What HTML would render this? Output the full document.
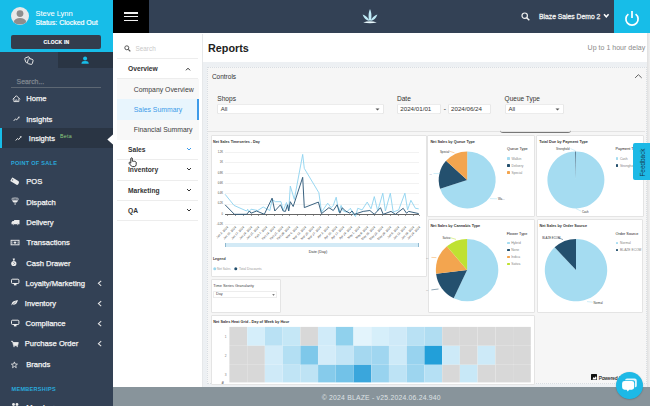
<!DOCTYPE html>
<html><head><meta charset="utf-8"><style>
html,body{margin:0;padding:0;width:650px;height:406px;overflow:hidden;background:#fff;}
body{position:relative;font-family:"Liberation Sans", sans-serif;}
.t{position:absolute;white-space:nowrap;}
.r{position:absolute;box-sizing:content-box;}
svg.r{overflow:visible;}
</style></head><body>
<div class="r" style="left:0px;top:0px;width:113px;height:406px;background:#334155;"></div>
<div class="r" style="left:0px;top:0px;width:113px;height:52px;background:#17bde8;"></div>
<svg class="r" style="left:11px;top:7px;" width="18" height="18" viewBox="0 0 18 18"><circle cx="9" cy="9" r="9" fill="#e9e9e9"/><circle cx="9" cy="6.6" r="3.4" fill="#8e8e8e"/><path d="M2.6 15.2 Q4 11 9 11 Q14 11 15.4 15.2 Q12.8 17.6 9 17.6 Q5.2 17.6 2.6 15.2Z" fill="#8e8e8e"/></svg>
<div class="t" style="left:35.40px;top:10.35px;font-size:7.5px;line-height:7.5px;color:#fff;font-weight:normal;-webkit-text-stroke:0.05px #fff;">Steve Lynn</div>
<div class="t" style="left:35.40px;top:18.97px;font-size:7.0px;line-height:7.0px;color:#fff;font-weight:normal;-webkit-text-stroke:0.2px #fff;">Status: Clocked Out</div>
<div class="r" style="left:11.1px;top:34.8px;width:89.8px;height:13.8px;background:#333d4d;border-radius:2px;"></div>
<div class="t" style="left:43.60px;top:40.17px;font-size:5.0px;line-height:5.0px;color:#fff;font-weight:bold;letter-spacing:0.2px;-webkit-text-stroke:0.15px #fff;">CLOCK IN</div>
<div class="r" style="left:58px;top:52px;width:55px;height:16px;background:#2a3544;"></div>
<svg class="r" style="left:20px;top:52px;" width="20" height="16" viewBox="0 0 20 16"><rect x="5.2" y="5.2" width="5" height="5.2" rx="1.2" transform="rotate(-20 7.7 7.8)" fill="none" stroke="#e8e8e8" stroke-width="0.9"/><rect x="7.8" y="6.9" width="5" height="5.2" rx="1.2" transform="rotate(15 10.3 9.5)" fill="#334155" stroke="#e8e8e8" stroke-width="0.9"/></svg>
<svg class="r" style="left:78px;top:52px;" width="14" height="16" viewBox="0 0 14 16"><circle cx="7.1" cy="6.5" r="2" fill="#17bde8"/><path d="M3.4 11.7 L3.9 9.9 Q4.4 8.9 7.1 8.9 Q9.8 8.9 10.3 9.9 L10.8 11.7Z" fill="#17bde8"/></svg>
<div class="t" style="left:16.60px;top:78.76px;font-size:6.9px;line-height:6.9px;color:#7e858e;font-weight:normal;-webkit-text-stroke:0.25px #7e858e;">Search...</div>
<div class="r" style="left:11px;top:87px;width:90px;height:1px;background:#5d6773;"></div>
<div class="t" style="left:26.20px;top:95.47px;font-size:7.6px;line-height:7.6px;color:#f4f4f4;font-weight:normal;-webkit-text-stroke:0.25px #f4f4f4;">Home</div>
<div class="t" style="left:26.20px;top:115.87px;font-size:7.6px;line-height:7.6px;color:#f4f4f4;font-weight:normal;-webkit-text-stroke:0.25px #f4f4f4;">Insights</div>
<div class="r" style="left:0px;top:128.3px;width:113px;height:20.19999999999999px;background:#2a3544;"></div>
<div class="r" style="left:0px;top:128.3px;width:2px;height:20.19999999999999px;background:#17bde8;"></div>
<div class="t" style="left:28.80px;top:135.37px;font-size:7.6px;line-height:7.6px;color:#f4f4f4;font-weight:normal;-webkit-text-stroke:0.25px #f4f4f4;">Insights</div>
<div class="t" style="left:60.00px;top:134.11px;font-size:5.3px;line-height:5.3px;color:#8dcb7f;font-weight:normal;letter-spacing:0.3px;">Beta</div>
<svg class="r" style="left:106.5px;top:133.5px;" width="7" height="11" viewBox="0 0 7 11"><path d="M6.5 0 L0.3 5.5 L6.5 11Z" fill="#fff"/></svg>
<div class="t" style="left:11.00px;top:161.26px;font-size:5.6px;line-height:5.6px;color:#2aa9dc;font-weight:bold;letter-spacing:0.25px;">POINT OF SALE</div>
<div class="t" style="left:26.20px;top:178.17px;font-size:7.6px;line-height:7.6px;color:#f4f4f4;font-weight:normal;-webkit-text-stroke:0.25px #f4f4f4;">POS</div>
<div class="t" style="left:26.20px;top:198.57px;font-size:7.6px;line-height:7.6px;color:#f4f4f4;font-weight:normal;-webkit-text-stroke:0.25px #f4f4f4;">Dispatch</div>
<div class="t" style="left:26.20px;top:219.07px;font-size:7.6px;line-height:7.6px;color:#f4f4f4;font-weight:normal;-webkit-text-stroke:0.25px #f4f4f4;">Delivery</div>
<div class="t" style="left:26.60px;top:239.47px;font-size:7.6px;line-height:7.6px;color:#f4f4f4;font-weight:normal;-webkit-text-stroke:0.25px #f4f4f4;">Transactions</div>
<div class="t" style="left:26.20px;top:259.57px;font-size:7.6px;line-height:7.6px;color:#f4f4f4;font-weight:normal;-webkit-text-stroke:0.25px #f4f4f4;">Cash Drawer</div>
<div class="t" style="left:25.50px;top:279.77px;font-size:7.6px;line-height:7.6px;color:#f4f4f4;font-weight:normal;-webkit-text-stroke:0.25px #f4f4f4;">Loyalty/Marketing</div>
<div class="t" style="left:24.80px;top:300.07px;font-size:7.6px;line-height:7.6px;color:#f4f4f4;font-weight:normal;-webkit-text-stroke:0.25px #f4f4f4;">Inventory</div>
<div class="t" style="left:25.50px;top:320.17px;font-size:7.6px;line-height:7.6px;color:#f4f4f4;font-weight:normal;-webkit-text-stroke:0.25px #f4f4f4;">Compliance</div>
<div class="t" style="left:24.70px;top:340.17px;font-size:7.6px;line-height:7.6px;color:#f4f4f4;font-weight:normal;-webkit-text-stroke:0.25px #f4f4f4;">Purchase Order</div>
<div class="t" style="left:26.20px;top:360.77px;font-size:7.6px;line-height:7.6px;color:#f4f4f4;font-weight:normal;-webkit-text-stroke:0.25px #f4f4f4;">Brands</div>
<div class="t" style="left:11.50px;top:386.76px;font-size:5.6px;line-height:5.6px;color:#2aa9dc;font-weight:bold;letter-spacing:0.25px;">MEMBERSHIPS</div>
<div class="t" style="left:26.20px;top:403.57px;font-size:7.6px;line-height:7.6px;color:#f4f4f4;font-weight:normal;-webkit-text-stroke:0.25px #f4f4f4;">Members</div>
<svg class="r" style="left:0;top:0" width="113" height="406" viewBox="0 0 113 406"><path d="M12.8 99.3 L16.4 95.7 L20 99.3" fill="none" stroke="#ececec" stroke-width="0.95"/><path d="M13.9 98.5 V101.6 H18.9 V98.5" fill="none" stroke="#ececec" stroke-width="0.9"/><path d="M15.7 101.6 V99.9 H17.1 V101.6" fill="none" stroke="#ececec" stroke-width="0.7"/><g transform="translate(0,0)"><path d="M13.7 120.9 L15.5 118.9 L16.7 119.9 L18.6 117.6" fill="none" stroke="#ececec" stroke-width="0.95"/><path d="M17.6 117 L19.6 116.5 L19.1 118.5Z" fill="#ececec"/></g><g transform="translate(2,19.6)"><path d="M13.7 120.9 L15.5 118.9 L16.7 119.9 L18.6 117.6" fill="none" stroke="#ececec" stroke-width="0.95"/><path d="M17.6 117 L19.6 116.5 L19.1 118.5Z" fill="#ececec"/></g><g transform="rotate(32 15.1 181.5)"><path d="M11.2 179.4 H17.6 Q19.2 179.4 19.2 181.5 Q19.2 183.6 17.6 183.6 H11.2 Q10.6 183.6 10.6 183 V180 Q10.6 179.4 11.2 179.4Z" fill="#ececec"/><circle cx="12.2" cy="181.5" r="0.6" fill="#334155"/></g><ellipse cx="15.1" cy="199.1" rx="3.4" ry="1.1" fill="none" stroke="#ececec" stroke-width="0.8"/><path d="M11.8 200.4 H18.4 L16.6 202.6 H13.6Z" fill="#ececec"/><path d="M15.1 202.6 V205" stroke="#ececec" stroke-width="0.8"/><path d="M14.1 220 H19.5 V224.3 H11.5 V222.2 L12.6 220.9 H14.1Z" fill="#ececec"/><circle cx="13.2" cy="224.6" r="0.95" fill="#334155"/><circle cx="13.2" cy="224.6" r="0.6" fill="#ececec"/><circle cx="17.8" cy="224.6" r="0.95" fill="#334155"/><circle cx="17.8" cy="224.6" r="0.6" fill="#ececec"/><rect x="11.1" y="240.3" width="7.9" height="4.5" fill="none" stroke="#ececec" stroke-width="0.95"/><path d="M15 241.2 L16.6 242.55 L15 243.9 L13.4 242.55Z" fill="#ececec"/><path d="M12.6 241.6 L12 242.55 L12.6 243.5 M17.4 241.6 L18 242.55 L17.4 243.5" fill="none" stroke="#ececec" stroke-width="0.6"/><circle cx="13.8" cy="263.5" r="2.6" fill="#ececec"/><path d="M12.7 258.6 H14.9 L14.4 260.7 H13.2Z" fill="#ececec"/><path d="M13.5 262.2 L14.6 263.4 L13.5 264.6" fill="none" stroke="#334155" stroke-width="0.6"/><rect x="11.5" y="279.2" width="7.4" height="4.3" rx="1" fill="none" stroke="#ececec" stroke-width="1"/><path d="M13.9 283.5 H16.5 V285.4 H13.9Z" fill="#ececec"/><rect x="11.5" y="320.2" width="7.4" height="4.3" rx="1" fill="none" stroke="#ececec" stroke-width="1"/><path d="M13.9 324.5 H16.5 V326.4 H13.9Z" fill="#ececec"/><path d="M11.3 305.8 Q11.6 301.8 14.4 301 Q16.2 300.5 17.9 300 Q17.4 302.2 16.4 303.4 Q14.6 305.2 12.2 304.6 Z" fill="#ececec"/><path d="M11.3 305.8 L15.8 301.8" stroke="#334155" stroke-width="0.5"/><path d="M11.1 341.3 H12.6 L13.6 345.6 H17.6 L18.3 342.5 H12.9" fill="#ececec" stroke="#ececec" stroke-width="0.8" stroke-linejoin="round"/><circle cx="14" cy="346.6" r="0.7" fill="#ececec"/><circle cx="17.2" cy="346.6" r="0.7" fill="#ececec"/><polygon points="14.40,361.90 15.19,364.01 17.44,364.11 15.68,365.52 16.28,367.69 14.40,366.45 12.52,367.69 13.12,365.52 11.36,364.11 13.61,364.01" fill="none" stroke="#ececec" stroke-width="0.8"/><circle cx="13.5" cy="404.5" r="1.4" fill="#ececec"/><circle cx="17" cy="404.5" r="1.4" fill="#ececec"/><path d="M101.2 280.8 L98.4 283.3 L101.2 285.8" fill="none" stroke="#e6e6e6" stroke-width="1.05"/><path d="M101.2 301.1 L98.4 303.6 L101.2 306.1" fill="none" stroke="#e6e6e6" stroke-width="1.05"/><path d="M101.2 321.20000000000005 L98.4 323.70000000000005 L101.2 326.20000000000005" fill="none" stroke="#e6e6e6" stroke-width="1.05"/><path d="M101.2 341.20000000000005 L98.4 343.70000000000005 L101.2 346.20000000000005" fill="none" stroke="#e6e6e6" stroke-width="1.05"/></svg>
<div class="r" style="left:113px;top:0px;width:537px;height:33.4px;background:#334155;"></div>
<div class="r" style="left:113px;top:0px;width:36px;height:33.4px;background:#000;"></div>
<div class="r" style="left:124px;top:12.3px;width:14px;height:1.3000000000000007px;background:#f2f2f2;"></div>
<div class="r" style="left:124px;top:16.0px;width:14px;height:1.3000000000000007px;background:#f2f2f2;"></div>
<div class="r" style="left:124px;top:19.7px;width:14px;height:1.3000000000000007px;background:#f2f2f2;"></div>
<svg class="r" style="left:360px;top:8px;" width="20" height="17" viewBox="0 0 20 17"><path d="M10 1 Q12 5 11.2 11.5 L10 13 L8.8 11.5 Q8 5 10 1Z" fill="#bfeaf6"/><path d="M2.6 6.5 Q7.5 8 9.6 13 Q4.5 12.2 2.6 6.5Z" fill="#bfeaf6"/><path d="M17.4 6.5 Q12.5 8 10.4 13 Q15.5 12.2 17.4 6.5Z" fill="#bfeaf6"/><path d="M3.2 14.6 Q10 12 16.8 14.6 Q10 16 3.2 14.6Z" fill="#e8f8fc"/></svg>
<svg class="r" style="left:521px;top:12px;" width="9" height="9" viewBox="0 0 9 9"><circle cx="3.7" cy="3.7" r="2.7" fill="none" stroke="#f0f0f0" stroke-width="1.2"/><path d="M5.7 5.7 L8.3 8.3" stroke="#f0f0f0" stroke-width="1.4"/></svg>
<div class="t" style="left:539.00px;top:13.66px;font-size:6.78px;line-height:6.78px;color:#eeeeee;font-weight:normal;-webkit-text-stroke:0.3px #eee;">Blaze Sales Demo 2</div>
<svg class="r" style="left:602.6px;top:13.2px;" width="7" height="6" viewBox="0 0 7 6"><path d="M1 1.3 L3.3 3.8 L5.6 1.3" fill="none" stroke="#fff" stroke-width="1.5"/></svg>
<div class="r" style="left:614px;top:0px;width:36px;height:33.4px;background:#17bde8;"></div>
<svg class="r" style="left:624px;top:9.3px;" width="16" height="16" viewBox="0 0 16 16"><path d="M4.4 5.1 A6.1 6.1 0 1 0 11.6 5.1" fill="none" stroke="#fff" stroke-width="1.7"/><path d="M8 1.9 V8.9" stroke="#fff" stroke-width="1.7"/></svg>
<div class="r" style="left:113px;top:33.4px;width:89px;height:353.6px;background:#fff;"></div>
<div class="r" style="left:202px;top:34px;width:1px;height:353px;background:#e6e8ea;"></div>
<svg class="r" style="left:123.5px;top:45px;" width="7" height="7" viewBox="0 0 7 7"><circle cx="2.8" cy="2.8" r="2" fill="none" stroke="#555" stroke-width="1"/><path d="M4.3 4.3 L6.3 6.3" stroke="#555" stroke-width="1.2"/></svg>
<div class="t" style="left:135.50px;top:46.18px;font-size:6.4px;line-height:6.4px;color:#c9c9c9;font-weight:normal;">Search</div>
<div class="r" style="left:117px;top:58px;width:81px;height:1px;background:#ededed;"></div>
<div class="t" style="left:128.00px;top:65.93px;font-size:6.7px;line-height:6.7px;color:#333;font-weight:bold;">Overview</div>
<svg class="r" style="left:185px;top:67px;" width="6" height="4" viewBox="0 0 6 4"><path d="M1 3.3 L3 1.2 L5 3.3" fill="none" stroke="#333" stroke-width="1"/></svg>
<div class="r" style="left:117px;top:78px;width:81px;height:1px;background:#ededed;"></div>
<div class="r" style="left:117px;top:79px;width:82px;height:61px;background:#f8f8f8;"></div>
<div class="t" style="left:133.80px;top:86.89px;font-size:6.86px;line-height:6.86px;color:#3d3d3d;font-weight:normal;">Company Overview</div>
<div class="r" style="left:117px;top:99px;width:82px;height:21px;background:#e8f5fd;"></div>
<div class="r" style="left:197px;top:99px;width:2px;height:21px;background:#3d9be9;"></div>
<div class="t" style="left:133.80px;top:106.69px;font-size:6.86px;line-height:6.86px;color:#3d9be9;font-weight:normal;">Sales Summary</div>
<div class="t" style="left:133.80px;top:127.09px;font-size:6.86px;line-height:6.86px;color:#3d3d3d;font-weight:normal;">Financial Summary</div>
<div class="t" style="left:128.00px;top:147.33px;font-size:6.7px;line-height:6.7px;color:#333;font-weight:bold;">Sales</div>
<svg class="r" style="left:185.5px;top:147.4px;" width="6" height="4" viewBox="0 0 6 4"><path d="M1 1 L3 3 L5 1" fill="none" stroke="#3d9be9" stroke-width="1"/></svg>
<div class="t" style="left:128.00px;top:167.33px;font-size:6.7px;line-height:6.7px;color:#333;font-weight:bold;">Inventory</div>
<svg class="r" style="left:185.5px;top:167.4px;" width="6" height="4" viewBox="0 0 6 4"><path d="M1 1 L3 3 L5 1" fill="none" stroke="#333" stroke-width="1"/></svg>
<div class="t" style="left:128.00px;top:187.73px;font-size:6.7px;line-height:6.7px;color:#333;font-weight:bold;">Marketing</div>
<svg class="r" style="left:185.5px;top:187.8px;" width="6" height="4" viewBox="0 0 6 4"><path d="M1 1 L3 3 L5 1" fill="none" stroke="#333" stroke-width="1"/></svg>
<div class="t" style="left:128.00px;top:208.03px;font-size:6.7px;line-height:6.7px;color:#333;font-weight:bold;">QA</div>
<svg class="r" style="left:185.5px;top:208.1px;" width="6" height="4" viewBox="0 0 6 4"><path d="M1 1 L3 3 L5 1" fill="none" stroke="#333" stroke-width="1"/></svg>
<div class="r" style="left:117px;top:159px;width:81px;height:1px;background:#ededed;"></div>
<div class="r" style="left:117px;top:180px;width:81px;height:1px;background:#ededed;"></div>
<div class="r" style="left:117px;top:200px;width:81px;height:1px;background:#ededed;"></div>
<div class="r" style="left:117px;top:220px;width:81px;height:1px;background:#ededed;"></div>
<svg class="r" style="left:127.6px;top:157.2px;" width="9" height="10" viewBox="0 0 9 10"><path d="M3 1 Q3.8 0.6 4.3 1.2 V4.2 Q5 3.8 5.6 4.3 Q6.4 4 7 4.6 Q7.8 4.5 8.2 5.2 V7.6 Q8 9.4 6.4 9.6 H4.4 Q3.4 9.4 2.6 8.2 L1 6.2 Q0.8 5.4 1.6 5.3 L2.8 6.2 V1.6Z" fill="#fff" stroke="#111" stroke-width="0.85"/></svg>
<div class="r" style="left:203px;top:33.4px;width:447px;height:28.6px;background:#fff;"></div>
<div class="t" style="left:208.00px;top:43.26px;font-size:10.8px;line-height:10.8px;color:#222;font-weight:bold;">Reports</div>
<div class="t" style="left:587.60px;top:44.33px;font-size:7.05px;line-height:7.05px;color:#8a8a8a;font-weight:normal;">Up to 1 hour delay</div>
<div class="r" style="left:203px;top:62px;width:447px;height:325px;background:#edf0f3;"></div>
<div class="r" style="left:646.5px;top:33px;width:3.5px;height:354px;background:linear-gradient(to right,#e0e0e0,#f0f0f0);"></div>
<div class="r" style="left:207px;top:67px;width:438px;height:315px;background:#f6f6f6;border:1px dotted #d9dee3;"></div>
<div class="t" style="left:211.90px;top:73.80px;font-size:6.5px;line-height:6.5px;color:#333;font-weight:normal;">Controls</div>
<svg class="r" style="left:633.5px;top:72.5px;" width="9" height="6" viewBox="0 0 9 6"><path d="M1.1 4.9 L4.4 1.7 L7.7 4.9" fill="none" stroke="#5a5a5a" stroke-width="0.95"/></svg>
<div class="t" style="left:217.30px;top:96.21px;font-size:6.6px;line-height:6.6px;color:#333;font-weight:normal;">Shops</div>
<div class="t" style="left:396.90px;top:96.21px;font-size:6.6px;line-height:6.6px;color:#333;font-weight:normal;">Date</div>
<div class="t" style="left:504.60px;top:96.30px;font-size:6.5px;line-height:6.5px;color:#333;font-weight:normal;">Queue Type</div>
<div class="r" style="left:217.3px;top:103.5px;width:166.50px;height:10.20px;background:#fff;box-shadow:inset 0 0 0 0.6px #d9d9d9;border-radius:2px;"></div>
<div class="t" style="left:220.70px;top:106.32px;font-size:6.0px;line-height:6.0px;color:#333;font-weight:normal;">All</div>
<svg class="r" style="left:374.5px;top:107.5px;" width="5" height="3" viewBox="0 0 5 3"><path d="M0.5 0.5 H4.5 L2.5 2.5Z" fill="#555"/></svg>
<div class="r" style="left:396.6px;top:103.5px;width:44.60px;height:10.20px;background:#fff;box-shadow:inset 0 0 0 0.6px #d9d9d9;border-radius:2px;"></div>
<div class="t" style="left:400.30px;top:106.15px;font-size:6.2px;line-height:6.2px;color:#333;font-weight:normal;">2024/01/01</div>
<div class="t" style="left:443.80px;top:105.81px;font-size:6.6px;line-height:6.6px;color:#222;font-weight:normal;">-</div>
<div class="r" style="left:447.6px;top:103.5px;width:43.90px;height:10.20px;background:#fff;box-shadow:inset 0 0 0 0.6px #d9d9d9;border-radius:2px;"></div>
<div class="t" style="left:451.00px;top:106.15px;font-size:6.2px;line-height:6.2px;color:#333;font-weight:normal;">2024/06/24</div>
<div class="r" style="left:504.6px;top:103.5px;width:59.70px;height:10.20px;background:#fff;box-shadow:inset 0 0 0 0.6px #d9d9d9;border-radius:2px;"></div>
<div class="t" style="left:508.50px;top:106.32px;font-size:6.0px;line-height:6.0px;color:#333;font-weight:normal;">All</div>
<svg class="r" style="left:555px;top:107.5px;" width="5" height="3" viewBox="0 0 5 3"><path d="M0.5 0.5 H4.5 L2.5 2.5Z" fill="#555"/></svg>
<div class="r" style="left:208px;top:130.8px;width:437px;height:0.799999999999983px;background:#e3e3e3;"></div>
<div class="r" style="left:500px;top:129.5px;width:71px;height:2px;border-bottom:1.2px solid #777;border-radius:0 0 3px 3px;"></div>
<div class="r" style="left:210.5px;top:134.6px;width:214.0px;height:140.4px;background:#fff;border:0.6px solid #e4e4e4;border-radius:1px;"></div>
<div class="t" style="left:213.00px;top:140.87px;font-size:3.7px;line-height:3.7px;color:#333;font-weight:bold;">Net Sales Timeseries - Day</div>
<div class="t" style="left:196px;width:27px;text-align:right;top:150.60px;font-size:2.6px;line-height:3px;color:#444;">1.2K</div>
<div class="r" style="left:224.7px;top:151.79999999999998px;width:194.0px;height:0.700000000000017px;background:#f2f2f2;"></div>
<div class="t" style="left:196px;width:27px;text-align:right;top:161.00px;font-size:2.6px;line-height:3px;color:#444;">1K</div>
<div class="r" style="left:224.7px;top:162.2px;width:194.0px;height:0.700000000000017px;background:#f2f2f2;"></div>
<div class="t" style="left:196px;width:27px;text-align:right;top:171.50px;font-size:2.6px;line-height:3px;color:#444;">0.8K</div>
<div class="r" style="left:224.7px;top:172.7px;width:194.0px;height:0.700000000000017px;background:#f2f2f2;"></div>
<div class="t" style="left:196px;width:27px;text-align:right;top:181.70px;font-size:2.6px;line-height:3px;color:#444;">0.6K</div>
<div class="r" style="left:224.7px;top:182.89999999999998px;width:194.0px;height:0.700000000000017px;background:#f2f2f2;"></div>
<div class="t" style="left:196px;width:27px;text-align:right;top:191.90px;font-size:2.6px;line-height:3px;color:#444;">0.4K</div>
<div class="r" style="left:224.7px;top:193.1px;width:194.0px;height:0.700000000000017px;background:#f2f2f2;"></div>
<div class="t" style="left:196px;width:27px;text-align:right;top:202.40px;font-size:2.6px;line-height:3px;color:#444;">0.2K</div>
<div class="r" style="left:224.7px;top:203.6px;width:194.0px;height:0.700000000000017px;background:#f2f2f2;"></div>
<div class="t" style="left:196px;width:27px;text-align:right;top:212.70px;font-size:2.6px;line-height:3px;color:#444;">0</div>
<div class="r" style="left:224.7px;top:213.79999999999998px;width:194.0px;height:0.9000000000000057px;background:#666;"></div>
<div class="t" style="left:196px;width:27px;text-align:right;top:223.00px;font-size:2.6px;line-height:3px;color:#444;">-0.2K</div>
<div class="r" style="left:224.7px;top:224.2px;width:194.0px;height:0.700000000000017px;background:#f2f2f2;"></div>
<svg class="r" style="left:200px;top:140px" width="230" height="90" viewBox="0 0 230 90"><polyline points="25.1,54.3 34.0,65.4 46.6,71.0 47.7,69.2 48.8,72.1 51.0,69.2 57.7,70.5 63.2,67.0 69.9,70.5 72.1,59.4 75.4,61.7 81.0,61.7 83.2,70.5 86.5,62.5 88.7,70.5 90.3,46.1 94.3,59.4 102.7,14.4 104.3,28.4 118.9,52.8 121.5,72.1 127.7,63.2 131.1,67.7 133.3,65.4 136.2,57.2 138.8,72.1 141.1,65.4 143.3,71.0 146.6,72.1 150.4,68.3 153.3,74.3 155.5,76.5 157.7,68.3 162.1,69.9 167.2,62.1 171.0,68.8 174.3,56.6 177.7,71.0 182.8,53.2 185.4,71.0 190.3,53.2 193.2,72.1 198.7,69.9 204.9,53.2 207.6,69.9 210.9,60.3 215.4,68.3 218.7,68.8" fill="none" stroke="#8dd2ef" stroke-width="0.9" stroke-linejoin="round"/><polyline points="25.1,64.8 34.4,74.3 46.6,74.3 49.5,71.0 51.0,73.2 56.6,71.0 64.3,74.3 72.1,58.1 74.8,71.0 80.5,64.8 83.2,71.0 85.4,71.4 87.6,64.8 88.7,71.0 90.3,61.7 93.2,66.5 102.7,37.3 104.3,67.6 118.4,62.1 121.5,73.6 128.9,67.7 133.3,70.5 137.1,64.8 139.9,73.2 142.2,67.7 145.5,71.0 149.9,73.2 152.1,71.0 154.4,74.3 163.2,71.4 169.9,70.5 174.3,74.3 180.5,67.7 183.2,74.3 191.0,71.4 195.4,74.3 203.2,68.3 206.5,73.2 208.7,71.4 218.7,73.6" fill="none" stroke="#2f5a79" stroke-width="0.95" stroke-linejoin="round"/></svg>
<div class="t" style="left:187.31px;top:226.40px;width:40px;text-align:right;font-size:3.0px;line-height:3px;color:#333;transform-origin:100% 0;transform:rotate(-45deg);">Jan 3, 2024</div>
<div class="r" style="left:227.3px;top:214.6px;width:0.5px;height:1.4000000000000057px;background:#999;"></div>
<div class="t" style="left:195.06px;top:226.40px;width:40px;text-align:right;font-size:3.0px;line-height:3px;color:#333;transform-origin:100% 0;transform:rotate(-45deg);">Jan 10, 2024</div>
<div class="r" style="left:235.1px;top:214.6px;width:0.5px;height:1.4000000000000057px;background:#999;"></div>
<div class="t" style="left:202.80px;top:226.40px;width:40px;text-align:right;font-size:3.0px;line-height:3px;color:#333;transform-origin:100% 0;transform:rotate(-45deg);">Jan 17, 2024</div>
<div class="r" style="left:242.8px;top:214.6px;width:0.5px;height:1.4000000000000057px;background:#999;"></div>
<div class="t" style="left:210.54px;top:226.40px;width:40px;text-align:right;font-size:3.0px;line-height:3px;color:#333;transform-origin:100% 0;transform:rotate(-45deg);">Jan 24, 2024</div>
<div class="r" style="left:250.5px;top:214.6px;width:0.5px;height:1.4000000000000057px;background:#999;"></div>
<div class="t" style="left:218.29px;top:226.40px;width:40px;text-align:right;font-size:3.0px;line-height:3px;color:#333;transform-origin:100% 0;transform:rotate(-45deg);">Jan 31, 2024</div>
<div class="r" style="left:258.3px;top:214.6px;width:0.5px;height:1.4000000000000057px;background:#999;"></div>
<div class="t" style="left:226.03px;top:226.40px;width:40px;text-align:right;font-size:3.0px;line-height:3px;color:#333;transform-origin:100% 0;transform:rotate(-45deg);">Feb 7, 2024</div>
<div class="r" style="left:266.0px;top:214.6px;width:0.5px;height:1.4000000000000057px;background:#999;"></div>
<div class="t" style="left:233.78px;top:226.40px;width:40px;text-align:right;font-size:3.0px;line-height:3px;color:#333;transform-origin:100% 0;transform:rotate(-45deg);">Feb 14, 2024</div>
<div class="r" style="left:273.8px;top:214.6px;width:0.5px;height:1.4000000000000057px;background:#999;"></div>
<div class="t" style="left:241.52px;top:226.40px;width:40px;text-align:right;font-size:3.0px;line-height:3px;color:#333;transform-origin:100% 0;transform:rotate(-45deg);">Feb 21, 2024</div>
<div class="r" style="left:281.5px;top:214.6px;width:0.5px;height:1.4000000000000057px;background:#999;"></div>
<div class="t" style="left:249.26px;top:226.40px;width:40px;text-align:right;font-size:3.0px;line-height:3px;color:#333;transform-origin:100% 0;transform:rotate(-45deg);">Feb 28, 2024</div>
<div class="r" style="left:289.3px;top:214.6px;width:0.5px;height:1.4000000000000057px;background:#999;"></div>
<div class="t" style="left:257.01px;top:226.40px;width:40px;text-align:right;font-size:3.0px;line-height:3px;color:#333;transform-origin:100% 0;transform:rotate(-45deg);">Mar 6, 2024</div>
<div class="r" style="left:297.0px;top:214.6px;width:0.5px;height:1.4000000000000057px;background:#999;"></div>
<div class="t" style="left:264.75px;top:226.40px;width:40px;text-align:right;font-size:3.0px;line-height:3px;color:#333;transform-origin:100% 0;transform:rotate(-45deg);">Mar 13, 2024</div>
<div class="r" style="left:304.8px;top:214.6px;width:0.5px;height:1.4000000000000057px;background:#999;"></div>
<div class="t" style="left:272.50px;top:226.40px;width:40px;text-align:right;font-size:3.0px;line-height:3px;color:#333;transform-origin:100% 0;transform:rotate(-45deg);">Mar 20, 2024</div>
<div class="r" style="left:312.5px;top:214.6px;width:0.5px;height:1.4000000000000057px;background:#999;"></div>
<div class="t" style="left:280.24px;top:226.40px;width:40px;text-align:right;font-size:3.0px;line-height:3px;color:#333;transform-origin:100% 0;transform:rotate(-45deg);">Mar 27, 2024</div>
<div class="r" style="left:320.2px;top:214.6px;width:0.5px;height:1.4000000000000057px;background:#999;"></div>
<div class="t" style="left:287.98px;top:226.40px;width:40px;text-align:right;font-size:3.0px;line-height:3px;color:#333;transform-origin:100% 0;transform:rotate(-45deg);">Apr 3, 2024</div>
<div class="r" style="left:328.0px;top:214.6px;width:0.5px;height:1.4000000000000057px;background:#999;"></div>
<div class="t" style="left:295.73px;top:226.40px;width:40px;text-align:right;font-size:3.0px;line-height:3px;color:#333;transform-origin:100% 0;transform:rotate(-45deg);">Apr 10, 2024</div>
<div class="r" style="left:335.7px;top:214.6px;width:0.5px;height:1.4000000000000057px;background:#999;"></div>
<div class="t" style="left:303.47px;top:226.40px;width:40px;text-align:right;font-size:3.0px;line-height:3px;color:#333;transform-origin:100% 0;transform:rotate(-45deg);">Apr 17, 2024</div>
<div class="r" style="left:343.5px;top:214.6px;width:0.5px;height:1.4000000000000057px;background:#999;"></div>
<div class="t" style="left:311.22px;top:226.40px;width:40px;text-align:right;font-size:3.0px;line-height:3px;color:#333;transform-origin:100% 0;transform:rotate(-45deg);">Apr 24, 2024</div>
<div class="r" style="left:351.2px;top:214.6px;width:0.5px;height:1.4000000000000057px;background:#999;"></div>
<div class="t" style="left:318.96px;top:226.40px;width:40px;text-align:right;font-size:3.0px;line-height:3px;color:#333;transform-origin:100% 0;transform:rotate(-45deg);">May 1, 2024</div>
<div class="r" style="left:359.0px;top:214.6px;width:0.5px;height:1.4000000000000057px;background:#999;"></div>
<div class="t" style="left:326.70px;top:226.40px;width:40px;text-align:right;font-size:3.0px;line-height:3px;color:#333;transform-origin:100% 0;transform:rotate(-45deg);">May 8, 2024</div>
<div class="r" style="left:366.7px;top:214.6px;width:0.5px;height:1.4000000000000057px;background:#999;"></div>
<div class="t" style="left:334.45px;top:226.40px;width:40px;text-align:right;font-size:3.0px;line-height:3px;color:#333;transform-origin:100% 0;transform:rotate(-45deg);">May 15, 2024</div>
<div class="r" style="left:374.4px;top:214.6px;width:0.5px;height:1.4000000000000057px;background:#999;"></div>
<div class="t" style="left:342.19px;top:226.40px;width:40px;text-align:right;font-size:3.0px;line-height:3px;color:#333;transform-origin:100% 0;transform:rotate(-45deg);">May 22, 2024</div>
<div class="r" style="left:382.2px;top:214.6px;width:0.5px;height:1.4000000000000057px;background:#999;"></div>
<div class="t" style="left:349.94px;top:226.40px;width:40px;text-align:right;font-size:3.0px;line-height:3px;color:#333;transform-origin:100% 0;transform:rotate(-45deg);">May 29, 2024</div>
<div class="r" style="left:389.9px;top:214.6px;width:0.5px;height:1.4000000000000057px;background:#999;"></div>
<div class="t" style="left:357.68px;top:226.40px;width:40px;text-align:right;font-size:3.0px;line-height:3px;color:#333;transform-origin:100% 0;transform:rotate(-45deg);">Jun 5, 2024</div>
<div class="r" style="left:397.7px;top:214.6px;width:0.5px;height:1.4000000000000057px;background:#999;"></div>
<div class="t" style="left:365.42px;top:226.40px;width:40px;text-align:right;font-size:3.0px;line-height:3px;color:#333;transform-origin:100% 0;transform:rotate(-45deg);">Jun 12, 2024</div>
<div class="r" style="left:405.4px;top:214.6px;width:0.5px;height:1.4000000000000057px;background:#999;"></div>
<div class="t" style="left:373.17px;top:226.40px;width:40px;text-align:right;font-size:3.0px;line-height:3px;color:#333;transform-origin:100% 0;transform:rotate(-45deg);">Jun 19, 2024</div>
<div class="r" style="left:413.2px;top:214.6px;width:0.5px;height:1.4000000000000057px;background:#999;"></div>
<div class="t" style="left:378.70px;top:226.40px;width:40px;text-align:right;font-size:3.0px;line-height:3px;color:#333;transform-origin:100% 0;transform:rotate(-45deg);">Jun 24, 2024</div>
<div class="r" style="left:418.7px;top:214.6px;width:0.5px;height:1.4000000000000057px;background:#999;"></div>
<div class="r" style="left:225.3px;top:243.1px;width:193.39999999999998px;height:3.9000000000000057px;background:#d3eaf6;"></div>
<div class="r" style="left:225.1px;top:243.1px;width:0.8000000000000114px;height:3.9000000000000057px;background:#8fb9cf;"></div>
<div class="r" style="left:418px;top:243.1px;width:0.8000000000000114px;height:3.9000000000000057px;background:#8fb9cf;"></div>
<div class="t" style="left:308.80px;top:250.58px;font-size:3.8px;line-height:3.8px;color:#333;font-weight:normal;">Date (Day)</div>
<div class="t" style="left:212.90px;top:258.15px;font-size:3.6px;line-height:3.6px;color:#444;font-weight:bold;">Legend</div>
<svg class="r" style="left:212.6px;top:266.8px;" width="3.5" height="3.5" viewBox="0 0 3.5 3.5"><circle cx="1.75" cy="1.75" r="1.5" fill="#9bd6ee"/></svg>
<div class="t" style="left:217.00px;top:268.03px;font-size:3.15px;line-height:3.15px;color:#999;font-weight:normal;">Net Sales</div>
<svg class="r" style="left:234.4px;top:266.7px;" width="3.5" height="3.5" viewBox="0 0 3.5 3.5"><circle cx="1.75" cy="1.75" r="1.5" fill="#24506e"/></svg>
<div class="t" style="left:239.00px;top:267.86px;font-size:3.35px;line-height:3.35px;color:#999;font-weight:normal;">Total Discounts</div>
<div class="r" style="left:427.1px;top:134.9px;width:106.10000000000002px;height:80.19999999999999px;background:#fff;border:0.6px solid #e4e4e4;border-radius:1px;"></div>
<div class="r" style="left:536.2px;top:134.9px;width:105.89999999999998px;height:80.19999999999999px;background:#fff;border:0.6px solid #e4e4e4;border-radius:1px;"></div>
<div class="r" style="left:427.6px;top:218.7px;width:105.19999999999993px;height:92.69999999999999px;background:#fff;border:0.6px solid #e4e4e4;border-radius:1px;"></div>
<div class="r" style="left:536.8px;top:218.7px;width:104.60000000000002px;height:92.69999999999999px;background:#fff;border:0.6px solid #e4e4e4;border-radius:1px;"></div>
<svg class="r" style="left:0;top:0" width="650" height="406" viewBox="0 0 650 406"><path d="M467.20 179.90 L467.20 151.40 A28.5 28.5 0 1 1 440.09 188.71Z" fill="#a5dcf1"/><path d="M467.20 179.90 L440.09 188.71 A28.5 28.5 0 0 1 446.02 160.83Z" fill="#24506e"/><path d="M467.20 179.90 L446.02 160.83 A28.5 28.5 0 0 1 467.20 151.40Z" fill="#f3a54f"/><path d="M575.90 179.90 L575.90 151.40 A28.5 28.5 0 1 1 575.15 151.41Z" fill="#a5dcf1"/><path d="M575.90 179.90 L575.15 151.41 A28.5 28.5 0 0 1 575.90 151.40Z" fill="#24506e"/><path d="M467.10 270.10 L467.10 238.90 A31.2 31.2 0 1 1 453.67 298.26Z" fill="#a5dcf1"/><path d="M467.10 270.10 L453.67 298.26 A31.2 31.2 0 0 1 436.10 273.63Z" fill="#24506e"/><path d="M467.10 270.10 L436.10 273.63 A31.2 31.2 0 0 1 446.92 246.30Z" fill="#f3a54f"/><path d="M467.10 270.10 L446.92 246.30 A31.2 31.2 0 0 1 467.10 238.90Z" fill="#bfe132"/><path d="M576.00 270.10 L576.00 238.90 A31.2 31.2 0 1 1 554.64 247.36Z" fill="#a5dcf1"/><path d="M576.00 270.10 L554.64 247.36 A31.2 31.2 0 0 1 576.00 238.90Z" fill="#24506e"/></svg>
<div class="t" style="left:430.40px;top:140.82px;font-size:3.76px;line-height:3.76px;color:#333;font-weight:bold;">Net Sales by Queue Type</div>
<div class="t" style="left:539.30px;top:140.80px;font-size:3.78px;line-height:3.78px;color:#333;font-weight:bold;">Total Due by Payment Type</div>
<div class="t" style="left:430.40px;top:224.72px;font-size:3.76px;line-height:3.76px;color:#333;font-weight:bold;">Net Sales by Cannabis Type</div>
<div class="t" style="left:539.50px;top:224.70px;font-size:3.78px;line-height:3.78px;color:#333;font-weight:bold;">Net Sales by Order Source</div>
<div class="t" style="left:507.00px;top:148.48px;font-size:3.8px;line-height:3.8px;color:#222;font-weight:normal;">Queue Type</div>
<div class="r" style="left:507.2px;top:157.1px;width:2.6999999999999886px;height:2.700000000000017px;background:#a5dcf1;border-radius:0.4px;"></div>
<div class="t" style="left:511.50px;top:157.81px;font-size:3.3px;line-height:3.3px;color:#858585;font-weight:normal;">Walkin</div>
<div class="r" style="left:507.2px;top:164.2px;width:2.6999999999999886px;height:2.700000000000017px;background:#24506e;border-radius:0.4px;"></div>
<div class="t" style="left:511.50px;top:164.91px;font-size:3.3px;line-height:3.3px;color:#858585;font-weight:normal;">Delivery</div>
<div class="r" style="left:507.2px;top:171.29999999999998px;width:2.6999999999999886px;height:2.700000000000017px;background:#f3a54f;border-radius:0.4px;"></div>
<div class="t" style="left:511.50px;top:172.01px;font-size:3.3px;line-height:3.3px;color:#858585;font-weight:normal;">Special</div>
<div class="t" style="left:615.40px;top:148.48px;font-size:3.8px;line-height:3.8px;color:#222;font-weight:normal;">Payment Type</div>
<div class="r" style="left:615.6px;top:157.1px;width:2.699999999999932px;height:2.700000000000017px;background:#a5dcf1;border-radius:0.4px;"></div>
<div class="t" style="left:619.90px;top:157.81px;font-size:3.3px;line-height:3.3px;color:#858585;font-weight:normal;">Cash</div>
<div class="r" style="left:615.6px;top:164.2px;width:2.699999999999932px;height:2.700000000000017px;background:#24506e;border-radius:0.4px;"></div>
<div class="t" style="left:619.90px;top:164.91px;font-size:3.3px;line-height:3.3px;color:#858585;font-weight:normal;">Stronghold</div>
<div class="t" style="left:506.70px;top:232.78px;font-size:3.8px;line-height:3.8px;color:#222;font-weight:normal;">Flower Type</div>
<div class="r" style="left:506.9px;top:241.7px;width:2.6999999999999886px;height:2.700000000000017px;background:#a5dcf1;border-radius:0.4px;"></div>
<div class="t" style="left:511.20px;top:242.41px;font-size:3.3px;line-height:3.3px;color:#858585;font-weight:normal;">Hybrid</div>
<div class="r" style="left:506.9px;top:248.5px;width:2.6999999999999886px;height:2.700000000000017px;background:#24506e;border-radius:0.4px;"></div>
<div class="t" style="left:511.20px;top:249.21px;font-size:3.3px;line-height:3.3px;color:#858585;font-weight:normal;">None</div>
<div class="r" style="left:506.9px;top:255.59999999999997px;width:2.6999999999999886px;height:2.6999999999999886px;background:#f3a54f;border-radius:0.4px;"></div>
<div class="t" style="left:511.20px;top:256.31px;font-size:3.3px;line-height:3.3px;color:#858585;font-weight:normal;">Indica</div>
<div class="r" style="left:506.9px;top:262.59999999999997px;width:2.6999999999999886px;height:2.6999999999999886px;background:#bfe132;border-radius:0.4px;"></div>
<div class="t" style="left:511.20px;top:263.31px;font-size:3.3px;line-height:3.3px;color:#858585;font-weight:normal;">Sativa</div>
<div class="t" style="left:615.60px;top:232.78px;font-size:3.8px;line-height:3.8px;color:#222;font-weight:normal;">Order Source</div>
<div class="r" style="left:615.8000000000001px;top:241.7px;width:2.699999999999932px;height:2.700000000000017px;background:#a5dcf1;border-radius:0.4px;"></div>
<div class="t" style="left:620.10px;top:242.41px;font-size:3.3px;line-height:3.3px;color:#858585;font-weight:normal;">Normal</div>
<div class="r" style="left:615.8000000000001px;top:248.5px;width:2.699999999999932px;height:2.700000000000017px;background:#24506e;border-radius:0.4px;"></div>
<div class="t" style="left:620.10px;top:249.21px;font-size:3.3px;line-height:3.3px;color:#858585;font-weight:normal;">BLAZE ECOM</div>
<div class="t" style="left:440.00px;top:151.23px;font-size:2.8px;line-height:2.8px;color:#333;font-weight:normal;">Special</div>
<svg class="r" style="left:0;top:0" width="650" height="406"><path d="M449.2 151.2 L454.5 152.8" stroke="#f3a54f" stroke-width="0.5" fill="none"/></svg>
<div class="t" style="left:429.50px;top:173.23px;font-size:2.8px;line-height:2.8px;color:#333;font-weight:normal;">...</div>
<svg class="r" style="left:0;top:0" width="650" height="406"><path d="M433.5 173.5 L440 173.6" stroke="#a5dcf1" stroke-width="0.5" fill="none"/></svg>
<div class="t" style="left:498.00px;top:198.43px;font-size:2.8px;line-height:2.8px;color:#333;font-weight:normal;">Wa...</div>
<svg class="r" style="left:0;top:0" width="650" height="406"><path d="M490 198.6 L497.2 198.8" stroke="#a5dcf1" stroke-width="0.5" fill="none"/></svg>
<div class="t" style="left:556.00px;top:148.43px;font-size:2.8px;line-height:2.8px;color:#333;font-weight:normal;">Stronghold</div>
<svg class="r" style="left:0;top:0" width="650" height="406"><path d="M570.5 148.6 L575.6 150.8" stroke="#a5dcf1" stroke-width="0.5" fill="none"/></svg>
<div class="t" style="left:582.00px;top:210.93px;font-size:2.8px;line-height:2.8px;color:#333;font-weight:normal;">Cash</div>
<svg class="r" style="left:0;top:0" width="650" height="406"><path d="M576 208.6 L581.2 211.2" stroke="#a5dcf1" stroke-width="0.5" fill="none"/></svg>
<div class="t" style="left:442.50px;top:237.43px;font-size:2.8px;line-height:2.8px;color:#333;font-weight:normal;">Sativa</div>
<svg class="r" style="left:0;top:0" width="650" height="406"><path d="M450.2 237.6 L456 239.4" stroke="#bfe132" stroke-width="0.5" fill="none"/></svg>
<div class="t" style="left:426.00px;top:256.93px;font-size:2.8px;line-height:2.8px;color:#333;font-weight:normal;">...</div>
<svg class="r" style="left:0;top:0" width="650" height="406"><path d="M431.4 257.4 L436.4 257.6" stroke="#f3a54f" stroke-width="0.5" fill="none"/></svg>
<div class="t" style="left:426.00px;top:289.43px;font-size:2.8px;line-height:2.8px;color:#333;font-weight:normal;">...</div>
<svg class="r" style="left:0;top:0" width="650" height="406"><path d="M431.4 289.9 L438.5 289.0" stroke="#24506e" stroke-width="0.5" fill="none"/></svg>
<div class="t" style="left:542.20px;top:237.43px;font-size:2.8px;line-height:2.8px;color:#333;font-weight:normal;">BLAZE ECOM</div>
<svg class="r" style="left:0;top:0" width="650" height="406"><path d="M558 237.6 L563 239.6" stroke="#24506e" stroke-width="0.5" fill="none"/></svg>
<div class="t" style="left:593.60px;top:301.63px;font-size:2.8px;line-height:2.8px;color:#333;font-weight:normal;">Normal</div>
<svg class="r" style="left:0;top:0" width="650" height="406"><path d="M587 301.6 L592.8 302.2" stroke="#a5dcf1" stroke-width="0.5" fill="none"/></svg>
<div class="r" style="left:210.5px;top:278.6px;width:68.80000000000001px;height:32.299999999999955px;background:#fff;border:0.6px solid #e4e4e4;border-radius:1px;"></div>
<div class="t" style="left:213.30px;top:284.00px;font-size:3.9px;line-height:3.9px;color:#444;font-weight:normal;">Time Series Granularity</div>
<div class="r" style="left:213.2px;top:291.1px;width:64px;height:6.6px;background:#fff;box-shadow:inset 0 0 0 0.5px #dcdcdc;border-radius:1.5px;"></div>
<div class="t" style="left:216.00px;top:293.38px;font-size:3.8px;line-height:3.8px;color:#444;font-weight:normal;">Day</div>
<svg class="r" style="left:271.8px;top:293.6px;" width="3" height="2" viewBox="0 0 3 2"><path d="M0.2 0.3 H2.8 L1.5 1.8Z" fill="#555"/></svg>
<div class="r" style="left:210.5px;top:314.5px;width:322.1px;height:68.10000000000002px;background:#fff;border:0.6px solid #e4e4e4;border-radius:1px;"></div>
<div class="t" style="left:213.30px;top:320.61px;font-size:3.77px;line-height:3.77px;color:#333;font-weight:bold;">Net Sales Heat Grid - Day of Week by Hour</div>
<div class="t" style="left:224.80px;top:335.84px;font-size:3.2px;line-height:3.2px;color:#777;font-weight:normal;">1</div>
<div class="t" style="left:224.80px;top:354.79px;font-size:3.2px;line-height:3.2px;color:#777;font-weight:normal;">2</div>
<div class="t" style="left:224.80px;top:373.74px;font-size:3.2px;line-height:3.2px;color:#777;font-weight:normal;">3</div>
<svg class="r" style="left:0;top:0" width="650" height="406"><rect x="229.40" y="326.90" width="17.73" height="18.90" fill="#d8d8d8"/><rect x="247.13" y="326.90" width="17.73" height="18.90" fill="#d5eefa"/><rect x="264.86" y="326.90" width="17.73" height="18.90" fill="#b9e1f4"/><rect x="282.59" y="326.90" width="17.73" height="18.90" fill="#c5e7f6"/><rect x="300.32" y="326.90" width="17.73" height="18.90" fill="#d8d8d8"/><rect x="318.05" y="326.90" width="17.73" height="18.90" fill="#d0ebf9"/><rect x="335.78" y="326.90" width="17.73" height="18.90" fill="#90d1ed"/><rect x="353.51" y="326.90" width="17.73" height="18.90" fill="#e3f4fc"/><rect x="371.24" y="326.90" width="17.73" height="18.90" fill="#d6effa"/><rect x="388.96" y="326.90" width="17.73" height="18.90" fill="#cfeaf8"/><rect x="406.69" y="326.90" width="17.73" height="18.90" fill="#b9e1f4"/><rect x="424.42" y="326.90" width="17.73" height="18.90" fill="#b0ddf2"/><rect x="442.15" y="326.90" width="17.73" height="18.90" fill="#d8d8d8"/><rect x="459.88" y="326.90" width="17.73" height="18.90" fill="#d8d8d8"/><rect x="477.61" y="326.90" width="17.73" height="18.90" fill="#d8d8d8"/><rect x="495.34" y="326.90" width="17.73" height="18.90" fill="#d8d8d8"/><rect x="513.07" y="326.90" width="17.73" height="18.90" fill="#d8d8d8"/><rect x="246.93" y="326.90" width="0.4" height="18.90" fill="#fff" fill-opacity="0.18"/><rect x="264.66" y="326.90" width="0.4" height="18.90" fill="#fff" fill-opacity="0.18"/><rect x="282.39" y="326.90" width="0.4" height="18.90" fill="#fff" fill-opacity="0.18"/><rect x="300.12" y="326.90" width="0.4" height="18.90" fill="#fff" fill-opacity="0.18"/><rect x="317.85" y="326.90" width="0.4" height="18.90" fill="#fff" fill-opacity="0.18"/><rect x="335.58" y="326.90" width="0.4" height="18.90" fill="#fff" fill-opacity="0.18"/><rect x="353.31" y="326.90" width="0.4" height="18.90" fill="#fff" fill-opacity="0.18"/><rect x="371.04" y="326.90" width="0.4" height="18.90" fill="#fff" fill-opacity="0.18"/><rect x="388.76" y="326.90" width="0.4" height="18.90" fill="#fff" fill-opacity="0.18"/><rect x="406.49" y="326.90" width="0.4" height="18.90" fill="#fff" fill-opacity="0.18"/><rect x="424.22" y="326.90" width="0.4" height="18.90" fill="#fff" fill-opacity="0.18"/><rect x="441.95" y="326.90" width="0.4" height="18.90" fill="#fff" fill-opacity="0.18"/><rect x="459.68" y="326.90" width="0.4" height="18.90" fill="#fff" fill-opacity="0.18"/><rect x="477.41" y="326.90" width="0.4" height="18.90" fill="#fff" fill-opacity="0.18"/><rect x="495.14" y="326.90" width="0.4" height="18.90" fill="#fff" fill-opacity="0.18"/><rect x="512.87" y="326.90" width="0.4" height="18.90" fill="#fff" fill-opacity="0.18"/><rect x="229.40" y="345.80" width="17.73" height="19.00" fill="#d8d8d8"/><rect x="247.13" y="345.80" width="17.73" height="19.00" fill="#d8d8d8"/><rect x="264.86" y="345.80" width="17.73" height="19.00" fill="#d3ecf9"/><rect x="282.59" y="345.80" width="17.73" height="19.00" fill="#b3dff3"/><rect x="300.32" y="345.80" width="17.73" height="19.00" fill="#7ec8ea"/><rect x="318.05" y="345.80" width="17.73" height="19.00" fill="#d3ecf9"/><rect x="335.78" y="345.80" width="17.73" height="19.00" fill="#c3e5f6"/><rect x="353.51" y="345.80" width="17.73" height="19.00" fill="#a5d8f0"/><rect x="371.24" y="345.80" width="17.73" height="19.00" fill="#a0d6f0"/><rect x="388.96" y="345.80" width="17.73" height="19.00" fill="#cdeaf8"/><rect x="406.69" y="345.80" width="17.73" height="19.00" fill="#98d3ef"/><rect x="424.42" y="345.80" width="17.73" height="19.00" fill="#229fd9"/><rect x="442.15" y="345.80" width="17.73" height="19.00" fill="#cdeaf8"/><rect x="459.88" y="345.80" width="17.73" height="19.00" fill="#d8d8d8"/><rect x="477.61" y="345.80" width="17.73" height="19.00" fill="#cdeaf8"/><rect x="495.34" y="345.80" width="17.73" height="19.00" fill="#d8d8d8"/><rect x="513.07" y="345.80" width="17.73" height="19.00" fill="#d8d8d8"/><rect x="246.93" y="345.80" width="0.4" height="19.00" fill="#fff" fill-opacity="0.18"/><rect x="264.66" y="345.80" width="0.4" height="19.00" fill="#fff" fill-opacity="0.18"/><rect x="282.39" y="345.80" width="0.4" height="19.00" fill="#fff" fill-opacity="0.18"/><rect x="300.12" y="345.80" width="0.4" height="19.00" fill="#fff" fill-opacity="0.18"/><rect x="317.85" y="345.80" width="0.4" height="19.00" fill="#fff" fill-opacity="0.18"/><rect x="335.58" y="345.80" width="0.4" height="19.00" fill="#fff" fill-opacity="0.18"/><rect x="353.31" y="345.80" width="0.4" height="19.00" fill="#fff" fill-opacity="0.18"/><rect x="371.04" y="345.80" width="0.4" height="19.00" fill="#fff" fill-opacity="0.18"/><rect x="388.76" y="345.80" width="0.4" height="19.00" fill="#fff" fill-opacity="0.18"/><rect x="406.49" y="345.80" width="0.4" height="19.00" fill="#fff" fill-opacity="0.18"/><rect x="424.22" y="345.80" width="0.4" height="19.00" fill="#fff" fill-opacity="0.18"/><rect x="441.95" y="345.80" width="0.4" height="19.00" fill="#fff" fill-opacity="0.18"/><rect x="459.68" y="345.80" width="0.4" height="19.00" fill="#fff" fill-opacity="0.18"/><rect x="477.41" y="345.80" width="0.4" height="19.00" fill="#fff" fill-opacity="0.18"/><rect x="495.14" y="345.80" width="0.4" height="19.00" fill="#fff" fill-opacity="0.18"/><rect x="512.87" y="345.80" width="0.4" height="19.00" fill="#fff" fill-opacity="0.18"/><rect x="229.4" y="345.60" width="301.4" height="0.4" fill="#fff" fill-opacity="0.18"/><rect x="229.40" y="364.80" width="17.73" height="17.60" fill="#d8d8d8"/><rect x="247.13" y="364.80" width="17.73" height="17.60" fill="#d8d8d8"/><rect x="264.86" y="364.80" width="17.73" height="17.60" fill="#cfeaf8"/><rect x="282.59" y="364.80" width="17.73" height="17.60" fill="#c0e4f5"/><rect x="300.32" y="364.80" width="17.73" height="17.60" fill="#bee3f4"/><rect x="318.05" y="364.80" width="17.73" height="17.60" fill="#86cbeb"/><rect x="335.78" y="364.80" width="17.73" height="17.60" fill="#72c2e8"/><rect x="353.51" y="364.80" width="17.73" height="17.60" fill="#3aa6dc"/><rect x="371.24" y="364.80" width="17.73" height="17.60" fill="#98d3ef"/><rect x="388.96" y="364.80" width="17.73" height="17.60" fill="#bde3f5"/><rect x="406.69" y="364.80" width="17.73" height="17.60" fill="#9dd5ef"/><rect x="424.42" y="364.80" width="17.73" height="17.60" fill="#b5e0f4"/><rect x="442.15" y="364.80" width="17.73" height="17.60" fill="#d8d8d8"/><rect x="459.88" y="364.80" width="17.73" height="17.60" fill="#c8e8f7"/><rect x="477.61" y="364.80" width="17.73" height="17.60" fill="#d8d8d8"/><rect x="495.34" y="364.80" width="17.73" height="17.60" fill="#d8d8d8"/><rect x="513.07" y="364.80" width="17.73" height="17.60" fill="#d8d8d8"/><rect x="246.93" y="364.80" width="0.4" height="17.60" fill="#fff" fill-opacity="0.18"/><rect x="264.66" y="364.80" width="0.4" height="17.60" fill="#fff" fill-opacity="0.18"/><rect x="282.39" y="364.80" width="0.4" height="17.60" fill="#fff" fill-opacity="0.18"/><rect x="300.12" y="364.80" width="0.4" height="17.60" fill="#fff" fill-opacity="0.18"/><rect x="317.85" y="364.80" width="0.4" height="17.60" fill="#fff" fill-opacity="0.18"/><rect x="335.58" y="364.80" width="0.4" height="17.60" fill="#fff" fill-opacity="0.18"/><rect x="353.31" y="364.80" width="0.4" height="17.60" fill="#fff" fill-opacity="0.18"/><rect x="371.04" y="364.80" width="0.4" height="17.60" fill="#fff" fill-opacity="0.18"/><rect x="388.76" y="364.80" width="0.4" height="17.60" fill="#fff" fill-opacity="0.18"/><rect x="406.49" y="364.80" width="0.4" height="17.60" fill="#fff" fill-opacity="0.18"/><rect x="424.22" y="364.80" width="0.4" height="17.60" fill="#fff" fill-opacity="0.18"/><rect x="441.95" y="364.80" width="0.4" height="17.60" fill="#fff" fill-opacity="0.18"/><rect x="459.68" y="364.80" width="0.4" height="17.60" fill="#fff" fill-opacity="0.18"/><rect x="477.41" y="364.80" width="0.4" height="17.60" fill="#fff" fill-opacity="0.18"/><rect x="495.14" y="364.80" width="0.4" height="17.60" fill="#fff" fill-opacity="0.18"/><rect x="512.87" y="364.80" width="0.4" height="17.60" fill="#fff" fill-opacity="0.18"/><rect x="229.4" y="364.60" width="301.4" height="0.4" fill="#fff" fill-opacity="0.18"/></svg>
<div class="t" style="left:221.50px;top:381.11px;font-size:4px;line-height:4px;color:#444;font-weight:bold;">#</div>
<div class="r" style="left:113px;top:387px;width:537px;height:19px;background:#88949b;"></div>
<div class="t" style="left:321.70px;top:394.54px;font-size:6.8px;line-height:6.8px;color:#dfe2e5;font-weight:normal;letter-spacing:0.23px;">&copy; 2024 BLAZE - v25.2024.06.24.940</div>
<div class="r" style="left:591px;top:374.1px;width:6px;height:5.899999999999977px;background:#111;border-radius:0.5px;"></div>
<svg class="r" style="left:591.5px;top:374.6px;" width="5" height="5" viewBox="0 0 5 5"><path d="M0.6 4 L1.6 2 L2.6 3 L3.8 1.2 L4.4 2.2 V4.4 H0.6Z" fill="#fff"/></svg>
<div class="t" style="left:598.70px;top:377.14px;font-size:4.8px;line-height:4.8px;color:#222;font-weight:normal;-webkit-text-stroke:0.1px #222;">Powered by</div>
<div class="r" style="left:633px;top:143px;width:17px;height:37px;background:#1db9e6;border-radius:2px 0 0 2px;"></div>
<div class="t" style="left:621.7px;top:158.6px;width:40px;height:7px;text-align:center;font-size:6.4px;line-height:7px;color:#17394a;transform:rotate(-90deg);">Feedback</div>
<div class="r" style="left:615.8px;top:371.8px;width:27.2px;height:27.2px;border-radius:50%;background:#1db9e6;box-shadow:0 0.5px 1.5px rgba(0,0,0,0.25)"></div>
<svg class="r" style="left:621px;top:377px;" width="17" height="17" viewBox="0 0 17 17"><path d="M6 1.6 H13.6 Q15.8 1.6 15.8 3.8 V8.4 Q15.8 10.3 14 10.3 V4.8 Q14 3.2 12.4 3.2 H4 Q4.3 1.6 6 1.6Z" fill="#e3f6fc"/><path d="M3.6 3.9 H10.8 Q13.2 3.9 13.2 6.3 V10.3 Q13.2 12.7 10.8 12.7 H8.2 L6.8 14.6 L5.6 12.7 H3.6 Q1.1 12.7 1.1 10.3 V6.3 Q1.1 3.9 3.6 3.9Z" fill="#fff"/></svg>
</body></html>
